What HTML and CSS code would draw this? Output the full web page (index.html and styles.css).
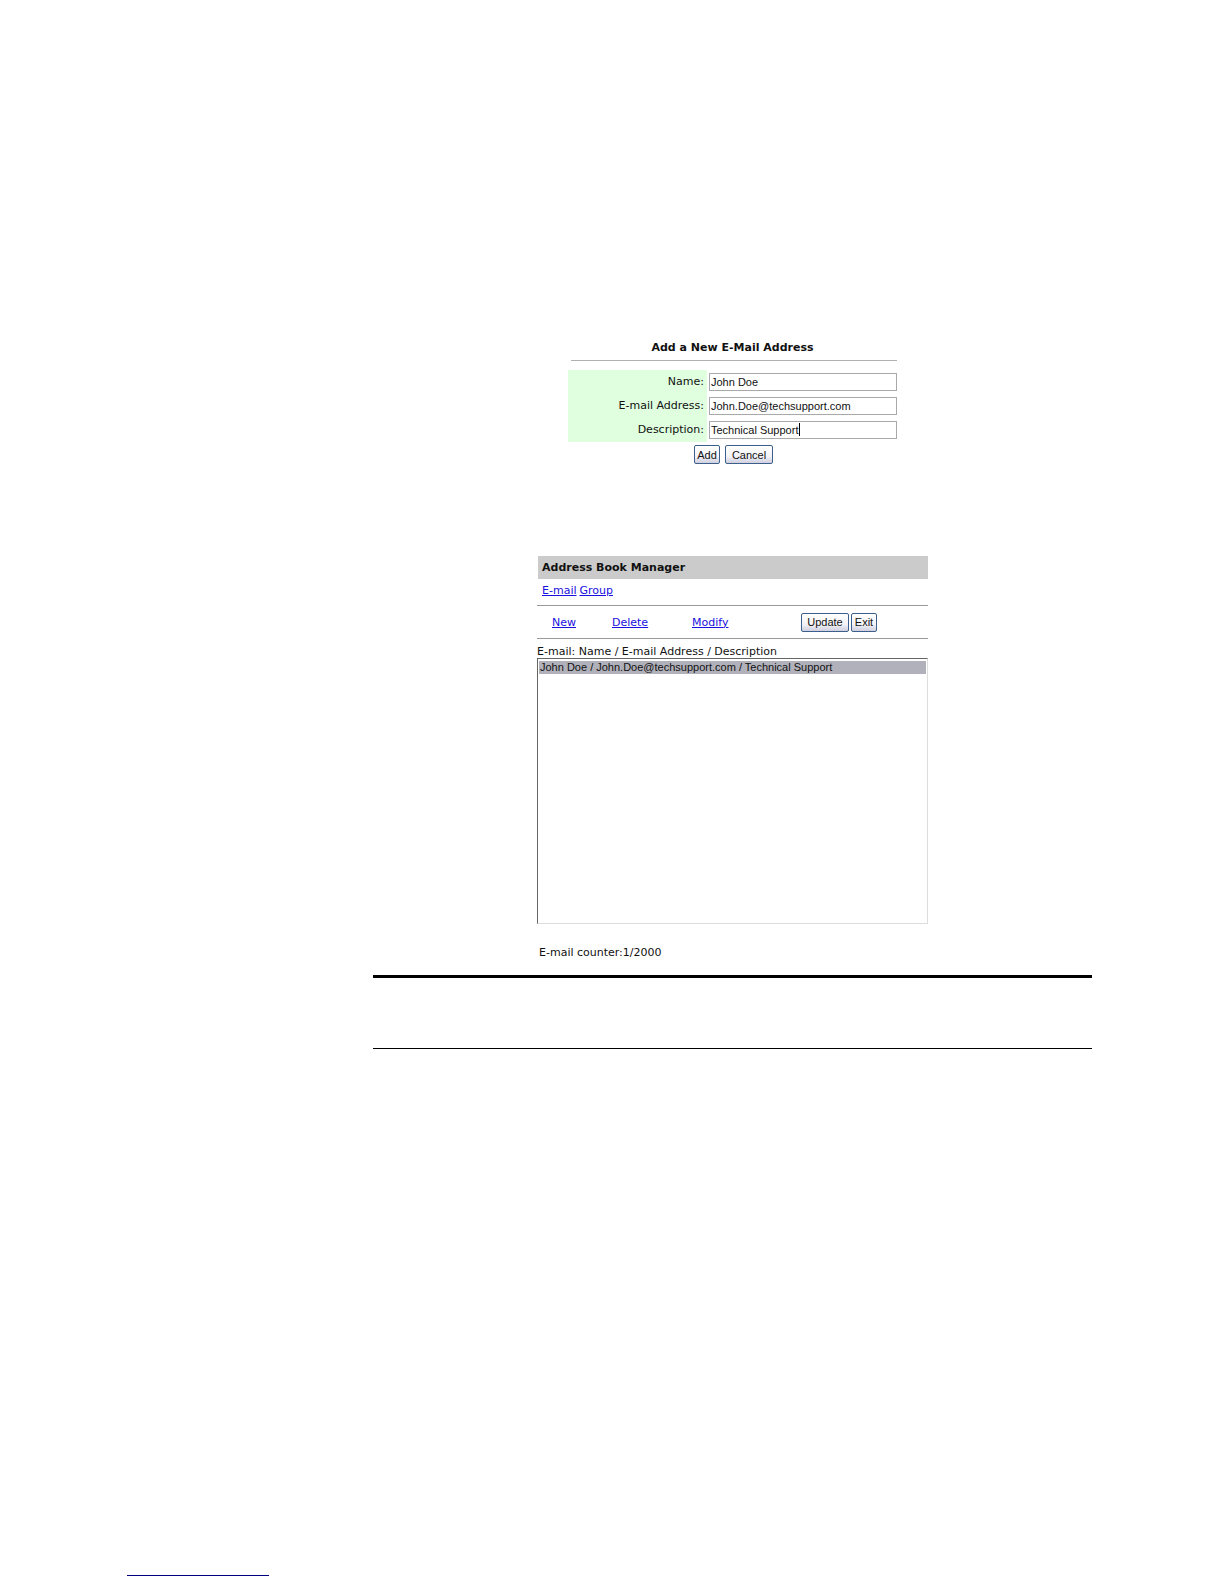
FILE: index.html
```html
<!DOCTYPE html>
<html lang="en">
<head>
  <meta charset="UTF-8">
  <meta name="viewport" content="width=device-width, initial-scale=1">
  <title>Address Book Manager</title>
  <link rel="stylesheet" href="styles.css">
</head>
<body>

<main class="content">
  <!-- Add form -->
  <form class="add-form">
    <h2>Add a New E-Mail Address</h2>
    <hr>
    <div class="row">
      <label for="name">Name:</label>
      <div class="field"><input type="text" id="name" value="John Doe"></div>
    </div>
    <div class="row">
      <label for="email">E-mail Address:</label>
      <div class="field"><input type="text" id="email" value="John.Doe@techsupport.com"></div>
    </div>
    <div class="row">
      <label for="description">Description:</label>
      <div class="field active"><input type="text" id="description" value="Technical Support"></div>
    </div>
    <div class="buttons">
      <button type="button" class="small">Add</button>
      <button type="button">Cancel</button>
    </div>
  </form>

  <!-- Address book -->
  <section class="manager">
    <h2>Address Book Manager</h2>
    <nav class="tabs">
      <a href="#email-list">E-mail</a>
      <a href="#group">Group</a>
    </nav>
    <div class="toolbar">
      <a href="#new">New</a>
      <a href="#delete">Delete</a>
      <a href="#modify">Modify</a>
      <div class="actions">
        <button type="button">Update</button>
        <button type="button" class="small">Exit</button>
      </div>
    </div>
    <label class="caption" for="email-list">E-mail: Name / E-mail Address / Description</label>
    <select id="email-list" size="18">
      <option selected>John Doe / John.Doe@techsupport.com / Technical Support</option>
    </select>
    <p class="counter">E-mail counter:1/2000</p>
  </section>

  <div class="note"></div>
</main>

<footer>
  <div class="footer-line"></div>
</footer>

</body>
</html>
```
FILE: styles.css
```css
* {
  box-sizing: border-box;
}
body {
  margin: 0;
  min-height: 100vh;
  display: flex;
  flex-direction: column;
  background: #fff;
  color: #111;
  font-family: "DejaVu Sans", Verdana, sans-serif;
  font-size: 11px;
  line-height: 16px;
}
h2 {
  margin: 0;
  font-size: 11px;
  line-height: 16px;
}
a {
  color: #1a10e0;
}
.content {
  flex: 1;
  margin: 340px 132px 0 373px;
}

/* Add form */
.add-form {
  width: 329px;
  max-width: 100%;
  margin: 0 auto;
}
.add-form h2 {
  text-align: center;
}
.add-form hr {
  margin: 4px 0 9px 3px;
  border: 0;
  border-top: 1px solid #b0b0b0;
}
.row {
  display: flex;
  height: 24px;
}
.row label {
  width: 139px;
  padding: 4px 3px 4px 0;
  background: #dfffdf;
  text-align: right;
}
.field {
  position: relative;
  flex: 1;
  padding: 3px 0 3px 2px;
}
.field input {
  display: block;
  width: 100%;
  height: 18px;
  padding: 0 1px;
  border: 1px solid #a9a9ad;
  background: #fff;
  color: #111;
  font: 11px "Liberation Sans", Arial, sans-serif;
}
/* text cursor */
.field.active::after {
  content: "";
  position: absolute;
  top: 5px;
  left: 92px;
  width: 1px;
  height: 13px;
  background: #000;
}
button {
  width: 48px;
  height: 19px;
  padding: 0;
  border: 1px solid #3d5f8c;
  border-radius: 2px;
  background: linear-gradient(#fff, #f3f3f8 60%, #cfcfe0);
  color: #111;
  font: 11px "Liberation Sans", Arial, sans-serif;
}
button.small {
  width: 26px;
}
.buttons {
  display: flex;
  justify-content: center;
  gap: 5px;
  padding: 3px 0 0 2px;
}

/* Address book */
.manager {
  width: 391px;
  max-width: 100%;
  margin: 92px auto 0;
}
.manager h2 {
  padding: 4px 4px 3px;
  margin-left: 1px;
  background: #cbcbcb;
}
.tabs {
  display: flex;
  gap: 3px;
  padding: 4px 5px 6px;
}
.toolbar {
  display: grid;
  grid-template-columns: 60px 80px 109px 1fr;
  align-items: center;
  height: 34px;
  padding-left: 15px;
  border-top: 1px solid #999;
  border-bottom: 1px solid #999;
}
.toolbar a {
  padding-top: 1px;
}
.actions {
  display: flex;
  gap: 2px;
}
.caption {
  display: block;
  padding-top: 7px;
  line-height: 12px;
}
select {
  display: block;
  width: 100%;
  height: 266px;
  padding: 2px 1px;
  border: 1px solid #ddd;
  border-top-color: #666;
  border-left-color: #666;
  border-radius: 0;
  background: #fff;
  font: 11px "Liberation Sans", Arial, sans-serif;
  overflow: hidden;
}
option {
  padding: 0 1px;
  color: #111;
}
option:checked {
  background: #b1b1bb linear-gradient(#b1b1bb, #b1b1bb);
}
.counter {
  margin: 21px 0 14px;
  padding-left: 2px;
}

/* Empty note box */
.note {
  height: 74px;
  border-top: 3px solid #000;
  border-bottom: 1px solid #000;
}
footer {
  padding: 0 127px 8px;
}
.footer-line {
  width: 142px;
  border-top: 1px solid #000080;
}
```
